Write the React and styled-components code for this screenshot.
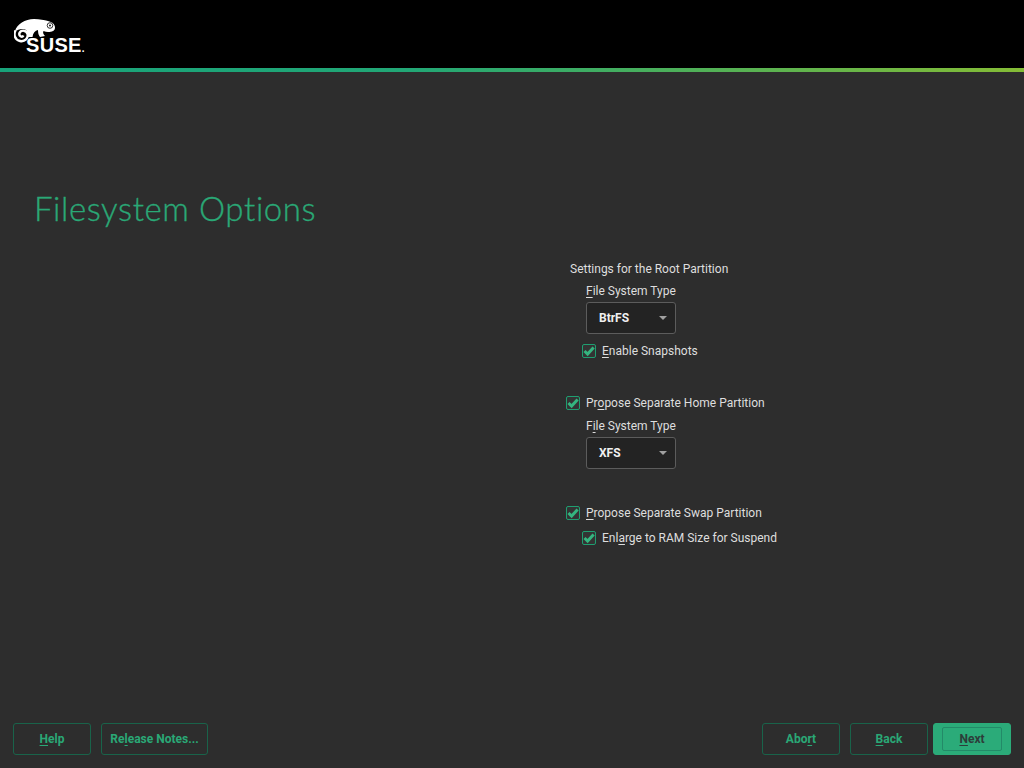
import React from "react";
import styled, { createGlobalStyle } from "styled-components";

const GlobalStyle = createGlobalStyle`
  html, body {
    margin: 0;
    padding: 0;
    background: #2d2d2d;
  }
`;

const Page = styled.div`
  width: 1024px;
  height: 768px;
  display: flex;
  flex-direction: column;
  overflow: hidden;
  background: #2d2d2d;
  color: #dedede;
  font-family: Roboto, "Liberation Sans", sans-serif;
  font-size: 12px;
`;

const Header = styled.header`
  height: 68px;
  flex: none;
  background: #000;
  padding: 19px 0 0 14px;
  box-sizing: border-box;
`;

const Logo = styled.div`
  position: relative;
  width: 72px;
  height: 34px;
`;

const Wordmark = styled.span`
  position: absolute;
  left: 12px;
  top: 15px;
  color: #fff;
  font-family: "Liberation Sans", Arial, sans-serif;
  font-size: 20px;
  line-height: 22px;
  font-weight: 700;
  letter-spacing: 0.3px;
`;

const Dot = styled.span`
  font-size: 10px;
  letter-spacing: 0;
`;

const Rule = styled.div`
  height: 4px;
  flex: none;
  background: linear-gradient(90deg, #18a37a 0%, #22a776 40%, #85bc36 100%);
`;

const Main = styled.main`
  flex: 1;
  display: flex;
  flex-direction: column;
`;

const Title = styled.h1`
  margin: 114px 0 0 34px;
  height: 44px;
  color: #2aa876;
  font-family: Lato, "Open Sans", sans-serif;
  font-size: 33px;
  line-height: 44px;
  font-weight: 300;
  letter-spacing: 0.6px;
  -webkit-text-stroke: 0.35px #2aa876;
`;

const Form = styled.div`
  margin: 30px 0 0 566px;
  display: flex;
  flex-direction: column;
  align-items: flex-start;
`;

const Heading = styled.div`
  margin-left: 4px;
  line-height: 18px;
`;

const FieldLabel = styled.label`
  display: block;
  margin: ${(p) => p.$top}px 0 2px 20px;
  line-height: 18px;
`;

const Combo = styled.div`
  width: 90px;
  height: 32px;
  box-sizing: border-box;
  margin-left: 20px;
  padding: 0 8px 1px 12px;
  display: flex;
  align-items: center;
  justify-content: space-between;
  background: #232323;
  border: 1px solid #5c5c5c;
  border-radius: 3px;
  color: #f0f0f0;
  font-weight: 700;
`;

const Caret = styled.span`
  width: 0;
  height: 0;
  border-left: 4px solid transparent;
  border-right: 4px solid transparent;
  border-top: 4px solid #a0a0a0;
`;

const CheckRow = styled.div`
  display: flex;
  align-items: center;
  gap: 6px;
  height: 18px;
  margin: ${(p) => p.$top}px 0 0 ${(p) => (p.$nested ? 16 : 0)}px;
`;

const Box = styled.span`
  width: 14px;
  height: 14px;
  box-sizing: border-box;
  flex: none;
  display: flex;
  align-items: center;
  justify-content: center;
  background: #333;
  border: 1px solid #1f9e70;
  border-radius: 2px;
`;

const Key = styled.span`
  text-decoration: underline;
  text-underline-offset: 2px;
`;

const Footer = styled.footer`
  flex: none;
  height: 45px;
  padding: 0 13px;
  display: flex;
  align-items: flex-start;
  gap: 10px;
`;

const Spacer = styled.div`
  flex: 1;
`;

const Button = styled.button`
  width: ${(p) => p.$width}px;
  height: 32px;
  padding: 0;
  box-sizing: border-box;
  margin-left: ${(p) => (p.$primary ? -5 : 0)}px;
  display: flex;
  align-items: center;
  justify-content: center;
  background: ${(p) => (p.$primary ? "#2bab79" : "transparent")};
  border: 1px solid ${(p) => (p.$primary ? "#2bab79" : "#19634a")};
  border-radius: 3px;
  color: ${(p) => (p.$primary ? "#2d3d3a" : "#2aa876")};
  font-family: Roboto, "Liberation Sans", sans-serif;
  font-size: 12px;
  font-weight: 700;
`;

const Focus = styled.span`
  width: 60px;
  height: 24px;
  box-sizing: border-box;
  display: flex;
  align-items: center;
  justify-content: center;
  border: 1px solid #238a68;
  border-radius: 2px;
`;

const Chameleon = () => (
  <svg width="44" height="24" viewBox="0 0 44 24" aria-hidden="true">
    <path
      fill="#fff"
      d="M1 12C3 5 11 0 20 0c6 0 10 1 14 2 4 1 7 3 7 6.500s-3 4.500-7 4.500c-1.500 0-3-.5-4.500-1-1 1.500 0 3.500 1.500 5l-5 1c-1.500-2-2-4-2-7-3 .5-5 3-5.500 7h-5.500c.5-3 .5-5-.5-6.500-3-2.500-8-1.500-12 1.500z"
    />
    <path
      fill="none"
      stroke="#fff"
      strokeWidth="2.400"
      d="M1.500 11.500C-.5 15 .5 21 6 22c5 1 8.500-3 7.500-7-1-4-6.500-4.500-8-1-1 3 2.500 5 4 2.500"
    />
    <circle cx="36" cy="6.500" r="2.800" fill="none" stroke="#000" strokeWidth="0.8" />
    <circle cx="36" cy="6.500" r="0.9" fill="#000" />
  </svg>
);

const Check = () => (
  <svg width="12" height="12" viewBox="0 0 12 12" aria-hidden="true">
    <path
      d="M1.500 6 4.600 9 10.600 2.400"
      fill="none"
      stroke="#35b57f"
      strokeWidth="3"
    />
  </svg>
);

const CheckField = ({ top, nested, children }) => (
  <CheckRow $top={top} $nested={nested}>
    <Box>
      <Check />
    </Box>
    <span>{children}</span>
  </CheckRow>
);

const App = () => {
  return (
    <Page>
      <GlobalStyle />
      <Header>
        <Logo>
          <Chameleon />
          <Wordmark>
            SUSE<Dot>.</Dot>
          </Wordmark>
        </Logo>
      </Header>
      <Rule />
      <Main>
        <Title>Filesystem Options</Title>
        <Form>
          <Heading>Settings for the Root Partition</Heading>
          <FieldLabel $top={4}>
            <Key>F</Key>ile System Type
          </FieldLabel>
          <Combo>
            BtrFS
            <Caret />
          </Combo>
          <CheckField top={8} nested>
            <Key>E</Key>nable Snapshots
          </CheckField>
          <CheckField top={34}>
            Pr<Key>o</Key>pose Separate Home Partition
          </CheckField>
          <FieldLabel $top={5}>
            F<Key>i</Key>le System Type
          </FieldLabel>
          <Combo>
            XFS
            <Caret />
          </Combo>
          <CheckField top={35}>
            <Key>P</Key>ropose Separate Swap Partition
          </CheckField>
          <CheckField top={7} nested>
            Enl<Key>a</Key>rge to RAM Size for Suspend
          </CheckField>
        </Form>
      </Main>
      <Footer>
        <Button $width={78}>
          <span>
            <Key>H</Key>elp
          </span>
        </Button>
        <Button $width={107}>
          <span>
            Re<Key>l</Key>ease Notes...
          </span>
        </Button>
        <Spacer />
        <Button $width={78}>
          <span>
            Abo<Key>r</Key>t
          </span>
        </Button>
        <Button $width={78}>
          <span>
            <Key>B</Key>ack
          </span>
        </Button>
        <Button $width={78} $primary>
          <Focus>
            <span>
              <Key>N</Key>ext
            </span>
          </Focus>
        </Button>
      </Footer>
    </Page>
  );
};

export default App;
